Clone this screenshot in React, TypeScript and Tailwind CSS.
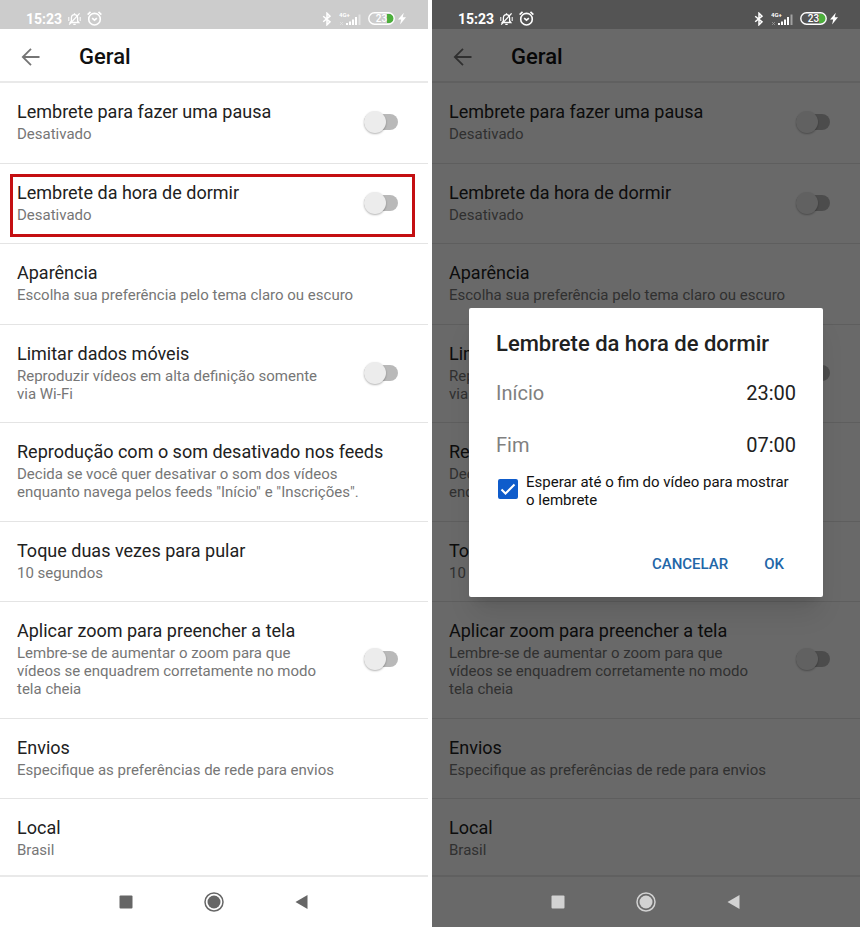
import { useId, useState } from "react";

type Setting = {
  title: string;
  description: string;
  toggle?: boolean;
};

const settings: Setting[] = [
  { title: "Lembrete para fazer uma pausa", description: "Desativado", toggle: true },
  { title: "Lembrete da hora de dormir", description: "Desativado", toggle: true },
  { title: "Aparência", description: "Escolha sua preferência pelo tema claro ou escuro" },
  { title: "Limitar dados móveis", description: "Reproduzir vídeos em alta definição somente via Wi-Fi", toggle: true },
  {
    title: "Reprodução com o som desativado nos feeds",
    description: 'Decida se você quer desativar o som dos vídeos enquanto navega pelos feeds "Início" e "Inscrições".',
  },
  { title: "Toque duas vezes para pular", description: "10 segundos" },
  {
    title: "Aplicar zoom para preencher a tela",
    description: "Lembre-se de aumentar o zoom para que vídeos se enquadrem corretamente no modo tela cheia",
    toggle: true,
  },
  { title: "Envios", description: "Especifique as preferências de rede para envios" },
  { title: "Local", description: "Brasil" },
];

function StatusBar() {
  return (
    <div className="bg-[#cccccc]">
      <div className="relative z-20 flex h-[29px] items-center justify-between pt-2 pr-[22px] pl-[26px] text-white">
        <div className="flex items-center gap-1.5">
          <span className="text-sm font-bold">15:23</span>
          <svg width="13" height="14" viewBox="0 0 13 14" fill="none" stroke="currentColor" strokeWidth="1.3">
            <path d="M2.2 10.5h8.6L9.6 9V6c0-2-1.2-3.4-3.1-3.4S3.4 4 3.4 6v3z" />
            <path d="M5.3 12.3h2.4M6.5 1.2v1.2" />
            <path d="M11.6 1.4 1.2 12.6" />
            <path d="M.8 5v4M12.2 5v4" strokeWidth="1" />
          </svg>
          <svg width="15" height="15" viewBox="0 0 14 14" fill="none" stroke="currentColor" strokeWidth="1.5">
            <circle cx="7" cy="7.6" r="5.4" />
            <path d="M.6 3.4 3.3 .8M13.4 3.4 10.700 .8" />
            <path d="M4.8 6.6 7 8.6l2.2-2" />
          </svg>
        </div>
        <div className="flex items-center gap-[7px]">
          <svg width="10" height="14" viewBox="0 0 10 14" fill="none" stroke="currentColor" strokeWidth="1.5">
            <path d="M1.2 4.2 8 9.9 5 12.8V1.2l3 2.9L1.2 9.8" />
          </svg>
          <svg width="22" height="14" viewBox="0 0 22 14" fill="currentColor">
            <text x="0" y="5" fontSize="6" fontWeight="700">4G+</text>
            <path d="M7 11h2v2H7zM10 9.5h2V13h-2zM13 7.5h2V13h-2zM16 5h2v8h-2z" />
            <path d="M19.5 2.500h2V13h-2z" opacity=".45" />
            <path d="M1 10l3 3M4 10l-3 3" stroke="currentColor" strokeWidth=".8" opacity=".4" />
          </svg>
          <svg width="27" height="13" viewBox="0 0 27 13">
            <path d="M19 2h2.500a4.500 4.500 0 0 1 0 9H19z" fill="#4caf3c" />
            <rect x=".8" y=".8" width="25.400" height="11.400" rx="5.700" fill="none" stroke="currentColor" strokeWidth="1.400" />
            <text x="13.500" y="10" fontSize="10" fontWeight="500" textAnchor="middle" fill="currentColor">23</text>
          </svg>
          <svg width="8" height="13" viewBox="0 0 8 13" fill="currentColor" className="-ml-1">
            <path d="M5.800 .8 0 7.500h3.200L2.100 12.400 8 5.300H4.700z" />
          </svg>
        </div>
      </div>
    </div>
  );
}

function AppBar() {
  return (
    <header className="flex h-[54px] items-center gap-[38px] border-b-2 border-[#e9e9e9] pt-[3px] pl-[21px]">
      <button type="button" aria-label="Voltar" className="text-[#757575]">
        <svg width="20" height="20" viewBox="0 0 20 20" fill="none" stroke="currentColor" strokeWidth="1.8">
          <path d="M18.500 10H2.500M10 1.800 1.800 10l8.200 8.200" />
        </svg>
      </button>
      <h1 className="text-[22px] font-medium text-[#111111]">Geral</h1>
    </header>
  );
}

function SettingRow({ setting, highlighted }: { setting: Setting; highlighted: boolean }) {
  const id = useId();
  const [on, setOn] = useState(false);

  return (
    <li className="relative flex grow items-center justify-between border-b border-[#e4e4e4] pt-[18px] pr-[30px] pb-[19px] pl-[17px] last:grow-0 last:border-b-0 last:pb-4">
      <div className={setting.toggle ? "max-w-[320px]" : "max-w-[370px]"}>
        <label htmlFor={setting.toggle ? id : undefined} className="mb-0.5 block text-lg leading-[22px] text-[#212121]">
          {setting.title}
        </label>
        <p className="text-[15px] leading-[18px] text-[#767676]">{setting.description}</p>
      </div>
      {setting.toggle && (
        <input
          id={id}
          type="checkbox"
          role="switch"
          checked={on}
          onChange={(e) => setOn(e.target.checked)}
          className="relative h-4 w-[34px] shrink-0 appearance-none rounded-full bg-[#b9b9b9] before:absolute before:-top-[3px] before:left-0 before:size-[22px] before:rounded-full before:bg-[#ececec] before:shadow-[0_1px_2px_rgba(0,0,0,0.3)] checked:bg-blue-300 checked:before:left-[13px] checked:before:bg-blue-600"
        />
      )}
      {highlighted && (
        <div className="pointer-events-none absolute top-[10px] right-[13px] bottom-[6px] left-[10px] border-3 border-[#c40f12]" />
      )}
    </li>
  );
}

function NavBar({ light }: { light: boolean }) {
  return (
    <nav className="border-t-2 border-[#e9e9e9]">
      <div className={`relative z-20 flex h-[50px] items-center justify-center gap-[68px] pr-px pb-px ${light ? "text-[#d2d2d2]" : "text-[#666666]"}`}>
        <button type="button" aria-label="Recentes">
          <svg width="20" height="20" viewBox="0 0 20 20" fill="currentColor">
            <rect x="3.500" y="3.500" width="13" height="13" rx="1" />
          </svg>
        </button>
        <button type="button" aria-label="Início">
          <svg width="20" height="20" viewBox="0 0 20 20">
            <circle cx="10" cy="10" r="9" fill="none" stroke="currentColor" strokeWidth="1.500" />
            <circle cx="10" cy="10" r="6.500" fill="currentColor" />
          </svg>
        </button>
        <button type="button" aria-label="Voltar">
          <svg width="20" height="20" viewBox="0 0 20 20" fill="currentColor">
            <path d="M3.500 10 15.500 3v14z" />
          </svg>
        </button>
      </div>
    </nav>
  );
}

function BedtimeDialog() {
  const [wait, setWait] = useState(true);

  return (
    <div className="absolute inset-0 z-10 flex items-center bg-black/59 px-[37px] pb-[22px]">
      <div role="dialog" aria-labelledby="bedtime-title" className="w-full rounded-xs bg-white px-[27px] pt-[22px] pb-[15px] shadow-xl">
        <h2 id="bedtime-title" className="mb-[9px] text-[22px] leading-7 font-medium text-[#212121]">
          Lembrete da hora de dormir
        </h2>
        <div className="flex h-[52px] items-center justify-between text-xl">
          <span className="text-[#808080]">Início</span>
          <button type="button" className="text-[#212121]">23:00</button>
        </div>
        <div className="flex h-[52px] items-center justify-between text-xl">
          <span className="text-[#808080]">Fim</span>
          <button type="button" className="text-[#212121]">07:00</button>
        </div>
        <label className="mt-0.5 flex items-start gap-2 pl-0.5 text-[15px] leading-[18px] text-[#111111]">
          <span className="mt-1.5 grid size-5 shrink-0 place-items-center">
            <input
              type="checkbox"
              checked={wait}
              onChange={(e) => setWait(e.target.checked)}
              className="col-start-1 row-start-1 size-5 appearance-none rounded-xs border-2 border-[#0f5ccb] checked:bg-[#0f5ccb]"
            />
            {wait && (
              <svg width="16" height="16" viewBox="0 0 16 16" fill="none" stroke="white" strokeWidth="2" className="pointer-events-none col-start-1 row-start-1">
                <path d="M1.500 8.500 5.500 12.500 14.500 3.500" />
              </svg>
            )}
          </span>
          Esperar até o fim do vídeo para mostrar o lembrete
        </label>
        <div className="mt-[37px] flex h-9 items-center justify-end gap-5 pr-1 text-[15px] font-medium text-[#2266a8]">
          <button type="button" className="px-2">CANCELAR</button>
          <button type="button" className="px-2">OK</button>
        </div>
      </div>
    </div>
  );
}

function Phone({ highlight, dialog = false }: { highlight?: number; dialog?: boolean }) {
  return (
    <section className="relative flex flex-col bg-white">
      <StatusBar />
      <AppBar />
      <ul className="flex grow flex-col">
        {settings.map((setting, i) => (
          <SettingRow key={setting.title} setting={setting} highlighted={i === highlight} />
        ))}
      </ul>
      <NavBar light={dialog} />
      {dialog && <BedtimeDialog />}
    </section>
  );
}

export default function App() {
  return (
    <main className="grid min-h-screen grid-cols-2 gap-1 bg-white font-[Roboto,sans-serif]">
      <Phone highlight={1} />
      <Phone dialog />
    </main>
  );
}
